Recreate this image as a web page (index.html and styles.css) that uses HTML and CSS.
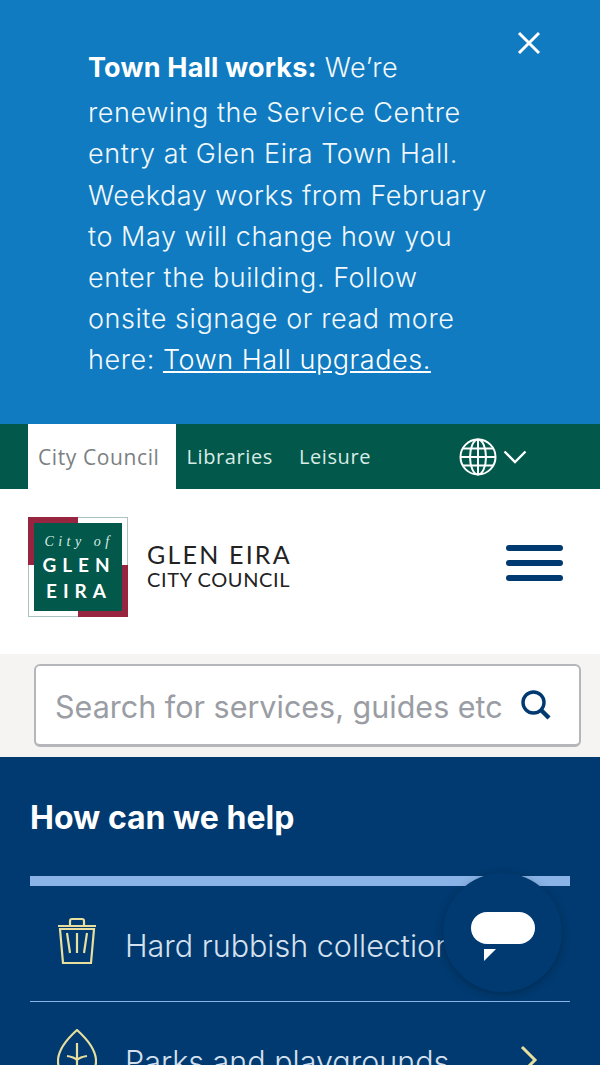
FILE: index.html
```html
<!DOCTYPE html>
<html lang="en">
<head>
    <meta charset="UTF-8">
    <meta name="viewport" content="width=device-width, initial-scale=1.0">
    <title>City of Glen Eira</title>
    <link rel="stylesheet" href="styles.css">
</head>
<body>
    <div class="alert">
        <p class="alert-text"><strong>Town Hall works:</strong> We’re renewing the Service Centre entry at Glen Eira Town Hall. Weekday works from February to May will change how you enter the building. Follow onsite signage or read more here: <a href="#">Town Hall upgrades.</a></p>
        <button class="alert-close" aria-label="Close">
            <svg width="24" height="24" viewBox="0 0 24 24"><path d="M2 2 L22 22 M22 2 L2 22" stroke="#fff" stroke-width="3" fill="none"/></svg>
        </button>
    </div>

    <nav class="site-tabs">
        <a class="tab active" href="#">City Council</a>
        <a class="tab" href="#">Libraries</a>
        <a class="tab" href="#">Leisure</a>
        <div class="lang">
            <svg width="38" height="38" viewBox="0 0 38 38" fill="none" stroke="#fff" stroke-width="2">
                <circle cx="19" cy="19" r="17.5"/>
                <ellipse cx="19" cy="19" rx="8" ry="17.5"/>
                <path d="M19 1.5 V36.5 M1.5 19 H36.5 M4 10.5 H34 M4 27.5 H34"/>
            </svg>
            <svg width="24" height="14" viewBox="0 0 24 14" fill="none" stroke="#fff" stroke-width="2.4"><path d="M1.5 1.5 L12 12 L22.5 1.5"/></svg>
        </div>
    </nav>

    <header class="masthead">
        <a class="logo" href="#">
            <svg class="logo-mark" width="100" height="100" viewBox="0 0 100 100">
                <rect x="0.5" y="0.5" width="99" height="99" fill="#fff" stroke="#a9c4c0"/>
                <path d="M0 0 H50 V6 H6 V48 H0 Z" fill="#97253f"/>
                <path d="M100 48 V100 H50 V94 H94 V48 Z" fill="#97253f"/>
                <rect x="6" y="6" width="88" height="88" fill="#02584a"/>
                <text class="mark-city" x="51" y="29" text-anchor="middle">City of</text>
                <text class="mark-name" x="51" y="55" text-anchor="middle">GLEN</text>
                <text class="mark-name" x="51" y="81" text-anchor="middle">EIRA</text>
            </svg>
            <div class="logo-text">
                <span class="logo-line1">GLEN EIRA</span>
                <span class="logo-line2">CITY COUNCIL</span>
            </div>
        </a>
        <button class="menu-btn" aria-label="Menu">
            <span></span><span></span><span></span>
        </button>
    </header>

    <div class="search-band">
        <div class="search-box">
            <span class="search-placeholder">Search for services, guides etc</span>
            <svg width="32" height="32" viewBox="0 0 32 32" fill="none" stroke="#003a70" stroke-width="3.4"><circle cx="13.5" cy="13.5" r="10.5"/><path d="M20.5 20.5 L29 29" stroke-width="4.4"/></svg>
        </div>
    </div>

    <main class="help">
        <h2>How can we help</h2>
        <ul class="help-list">
            <li>
                <svg class="help-icon" width="40" height="48" viewBox="0 0 40 48" fill="none" stroke="#e8df9f" stroke-width="2.2">
                    <path d="M1 9 H39 M13 8 V4 Q13 2 15 2 H25 Q27 2 27 4 V8 M3 12 H37 L34 46 H6 Z M10 16 L13 36 M20 16 V36 M30 16 L27 36"/>
                </svg>
                <span>Hard rubbish collection</span>
            </li>
            <li>
                <svg class="help-icon" width="40" height="56" viewBox="0 0 40 56" fill="none" stroke="#e8df9f" stroke-width="2.2">
                    <path d="M20 1 C10 10 1 20 1 32 C1 44 10 50 20 50 C30 50 39 44 39 32 C39 20 30 10 20 1 Z M20 14 V56 M10 27 Q17 28 20 31 Q23 28 30 27"/>
                </svg>
                <span>Parks and playgrounds</span>
                <svg class="help-arrow" width="18" height="30" viewBox="0 0 18 30" fill="none" stroke="#e8df9f" stroke-width="3"><path d="M2 2 L15 15 L2 28"/></svg>
            </li>
        </ul>
    </main>

    <button class="chat-btn" aria-label="Chat">
        <svg width="64" height="50" viewBox="0 0 64 50"><rect x="0" y="0" width="64" height="32" rx="16" fill="#fff"/><path d="M13 37 H25 L13 49 Z" fill="#fff"/></svg>
    </button>
</body>
</html>
```
FILE: styles.css
```css
html, body {
    margin: 0;
    padding: 0;
    height: 1065px;
    overflow: hidden;
}

body {
    font-family: Inter, Lato, sans-serif;
    background-color: #003a70;
    color: #fff;
}

button {
    background: none;
    border: none;
    padding: 0;
}

.alert {
    height: 424px;
    box-sizing: border-box;
    padding: 47px 105px 0 88px;
    background-color: #107bc0;
    position: relative;
}

.alert-text {
    margin: 0;
    font-size: 27px;
    line-height: 41.2px;
    letter-spacing: 0.55px;
    font-weight: 300;
    color: #f2f8fc;
}

.alert-text strong {
    display: inline-block;
    padding-bottom: 4px;
    font-weight: 700;
    letter-spacing: 0.2px;
    color: #fff;
}

.alert-text a {
    color: #fff;
}

.alert-close {
    position: absolute;
    top: 31px;
    left: 517px;
    line-height: 0;
}

.site-tabs {
    display: flex;
    height: 65px;
    padding-left: 28px;
    background-color: #02584a;
}

.tab {
    display: flex;
    align-items: center;
    padding: 0 16px 0 10px;
    font-family: "Open Sans", sans-serif;
    font-size: 20px;
    letter-spacing: 0.6px;
    color: #d8ece6;
    text-decoration: none;
}

.tab.active {
    padding-right: 17px;
    font-size: 21px;
    background-color: #fff;
    color: #7b7f82;
}

.lang {
    display: flex;
    align-items: center;
    gap: 6px;
    margin-left: 72px;
}

.masthead {
    display: flex;
    justify-content: space-between;
    align-items: center;
    height: 165px;
    padding: 0 37px 0 28px;
    background-color: #fff;
}

.logo {
    display: flex;
    align-items: center;
    gap: 19px;
    color: #222;
    text-decoration: none;
}

.logo-mark {
    display: block;
    margin-top: -9px;
}

.mark-city {
    font-family: "Liberation Serif", serif;
    font-style: italic;
    font-size: 14px;
    letter-spacing: 4.5px;
    fill: #d8ece6;
}

.mark-name {
    font-family: Lato, sans-serif;
    font-weight: 700;
    font-size: 19px;
    letter-spacing: 6px;
    fill: #fff;
}

.logo-text {
    display: flex;
    flex-direction: column;
    margin-top: -11px;
    font-family: Lato, sans-serif;
}

.logo-line1 {
    font-size: 25px;
    line-height: 27px;
    letter-spacing: 2.2px;
}

.logo-line2 {
    font-size: 20px;
    line-height: 23px;
    letter-spacing: 0.6px;
}

.menu-btn {
    display: flex;
    flex-direction: column;
    gap: 9px;
    margin-top: -17px;
}

.menu-btn span {
    display: block;
    width: 57px;
    height: 6px;
    border-radius: 3px;
    background-color: #003a70;
}

.search-band {
    height: 103px;
    box-sizing: border-box;
    padding: 10px 19px 0 34px;
    background-color: #f5f4f2;
}

.search-box {
    display: flex;
    justify-content: space-between;
    align-items: center;
    height: 83px;
    box-sizing: border-box;
    padding: 0 27px 0 19px;
    background-color: #fff;
    border: 2px solid #b4b6ba;
    border-bottom-width: 3px;
    border-radius: 6px;
}

.search-placeholder {
    margin-top: 2px;
    font-size: 30.5px;
    color: #9a9da3;
    white-space: nowrap;
}

.help {
    padding: 0 30px;
}

.help h2 {
    margin: 0;
    padding: 42px 0 39px;
    font-size: 32px;
    line-height: 38px;
    font-weight: 700;
}

.help-list {
    list-style: none;
    margin: 0;
    padding: 0;
    border-top: 10px solid #8ab4e8;
}

.help-list li {
    display: flex;
    align-items: center;
    height: 115px;
    padding-left: 27px;
    border-bottom: 1px solid #8ab4e8;
    font-size: 30.5px;
    font-weight: 300;
    color: #d5e1ee;
    white-space: nowrap;
}

.help-list span {
    margin-top: 4px;
}

.help-icon {
    flex: none;
    margin-top: -6px;
    margin-right: 28px;
}

.help-arrow {
    flex: none;
    margin-left: auto;
    margin-right: 32px;
}

.chat-btn {
    position: fixed;
    top: 873px;
    left: 443px;
    display: flex;
    align-items: center;
    justify-content: center;
    width: 119px;
    height: 119px;
    padding-top: 8px;
    border-radius: 50%;
    background-color: #003a70;
    box-shadow: 0 2px 8px rgba(0, 0, 0, 0.25);
}
```
